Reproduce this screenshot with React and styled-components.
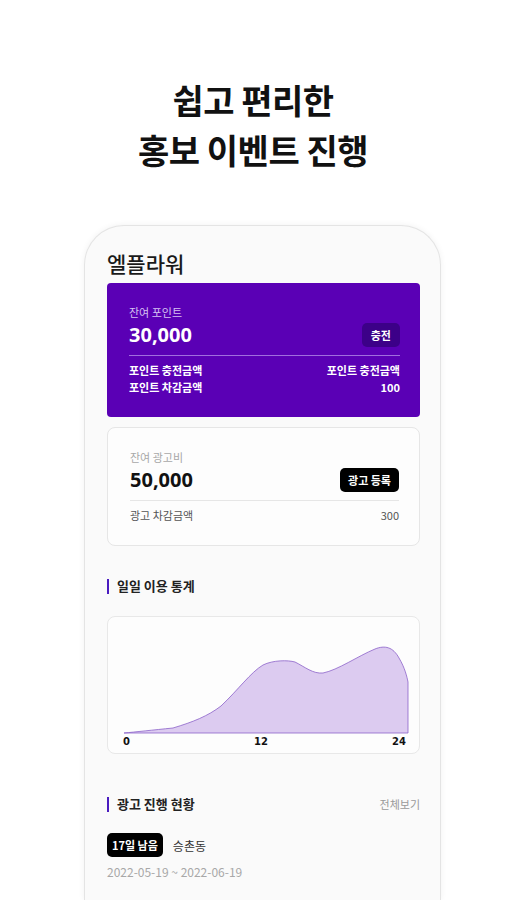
import React from 'react'
import styled, {createGlobalStyle} from 'styled-components'

const Global = createGlobalStyle`
  html, body {
    margin: 0;
    padding: 0;
    background: #ffffff;
  }
  body {
    font-family: 'Noto Sans CJK KR', 'Noto Sans', sans-serif;
    color: #111;
  }
`

const Page = styled.div`
  width: 506px;
  height: 900px;
  overflow: hidden;
  display: flex;
  flex-direction: column;
  align-items: center;
`

const Headline = styled.h1`
  margin: 75px 0 0;
  font-size: 34px;
  line-height: 50px;
  font-weight: 700;
  text-align: center;
  color: #111;
  letter-spacing: -0.5px;
`

const Phone = styled.div`
  margin-top: 50px;
  margin-left: 19px;
  width: 357px;
  flex: 1;
  box-sizing: border-box;
  padding: 23px 20px 0 22px;
  background: #fafafa;
  border: 1px solid #e4e4e4;
  border-bottom: none;
  border-radius: 40px 40px 0 0;
  box-shadow: 0 0 6px rgba(0, 0, 0, 0.06);
`

const Brand = styled.div`
  font-size: 21px;
  line-height: 28px;
  font-weight: 500;
  color: #1a1a1a;
`

const Card = styled.div`
  margin-top: ${p => p.gap || 0}px;
  box-sizing: border-box;
  padding: 21px 20px 21px 22px;
  border-radius: ${p => (p.purple ? 4 : 8)}px;
  background: ${p => (p.purple ? '#5a00b5' : '#fdfdfd')};
  border: ${p => (p.purple ? 'none' : '1px solid #e6e6e6')};
  color: ${p => (p.purple ? '#fff' : '#111')};
`

const Label = styled.div`
  font-size: 11px;
  line-height: 16px;
  color: ${p => (p.light ? '#d6c2f2' : '#a8a8a8')};
`

const AmountRow = styled.div`
  margin-top: 2px;
  display: flex;
  align-items: center;
  justify-content: space-between;
`

const Amount = styled.div`
  font-size: 20px;
  line-height: 26px;
  font-weight: 700;
  font-family: 'Noto Sans', 'Noto Sans CJK KR', sans-serif;
`

const SmallButton = styled.div`
  height: 24px;
  padding: 0 ${p => (p.dark ? 8 : 9)}px;
  display: flex;
  align-items: center;
  border-radius: 5px;
  font-size: 11px;
  font-weight: 700;
  color: #fff;
  background: ${p => (p.dark ? '#000' : '#3c0088')};
`

const Divider = styled.div`
  margin: 7px 0 ${p => p.after || 6}px;
  height: 1px;
  background: ${p => (p.light ? 'rgba(220, 200, 255, 0.55)' : '#e6e6e6')};
`

const InfoRow = styled.div`
  display: flex;
  justify-content: space-between;
  font-size: 11px;
  line-height: 17px;
  font-weight: ${p => (p.bold ? 700 : 400)};
  color: ${p => p.color || 'inherit'};
`

const SectionHead = styled.div`
  margin-top: ${p => p.gap}px;
  display: flex;
  align-items: center;
  justify-content: space-between;
`

const SectionTitle = styled.div`
  display: flex;
  align-items: center;
  gap: 8px;
  font-size: 13px;
  line-height: 20px;
  font-weight: 700;
  color: #222;

  &::before {
    content: '';
    width: 2px;
    height: 15px;
    background: #4a1cc0;
  }
`

const More = styled.div`
  font-size: 11px;
  color: #999;
`

const ChartCard = styled.div`
  margin-top: 20px;
  height: 138px;
  box-sizing: border-box;
  border: 1px solid #e8e8e8;
  border-radius: 8px;
  background: #fdfdfd;
  padding: 0 13px 0 15px;
  display: flex;
  flex-direction: column;
  justify-content: flex-end;
`

const Axis = styled.div`
  display: flex;
  justify-content: space-between;
  padding: 2px 0 5px;
  font-size: 10px;
  line-height: 12px;
  font-weight: 700;
  color: #111;
  font-family: 'DejaVu Sans', sans-serif;
`

const BadgeRow = styled.div`
  margin-top: 19px;
  display: flex;
  align-items: center;
  gap: 10px;
`

const Badge = styled.div`
  height: 24px;
  padding: 0 5px;
  display: flex;
  align-items: center;
  border-radius: 5px;
  background: #000;
  color: #fff;
  font-size: 11px;
  font-weight: 700;
`

const Place = styled.div`
  font-size: 12px;
  color: #333;
`

const Period = styled.div`
  margin-top: 7px;
  font-size: 12px;
  line-height: 16px;
  color: #a8a8a8;
`

const area =
  'M1 101 C 12 100, 30 98, 50 96 C 70 90, 85 84, 98 74 C 115 58, 128 40, 140 33 C 150 28, 165 28, 172 30 C 182 35, 190 42, 200 41 C 215 38, 235 24, 252 17 C 262 13, 270 15, 276 26 C 282 36, 284 45, 285 50 L 285 101 Z'

const Chart = () => (
  <svg width="286" height="102" viewBox="0 0 286 102" style={{display: 'block'}}>
    <path d={area} fill="#dccbf0" stroke="#8b62c9" strokeWidth="0.8" />
  </svg>
)

export default function App() {
  return (
    <Page>
      <Global />
      <Headline>
        쉽고 편리한
        <br />
        홍보 이벤트 진행
      </Headline>
      <Phone>
        <Brand>엘플라워</Brand>
        <Card purple gap={6}>
          <Label light>잔여 포인트</Label>
          <AmountRow>
            <Amount>30,000</Amount>
            <SmallButton>충전</SmallButton>
          </AmountRow>
          <Divider light />
          <InfoRow bold>
            <span>포인트 충전금액</span>
            <span>포인트 충전금액</span>
          </InfoRow>
          <InfoRow bold>
            <span>포인트 차감금액</span>
            <span>100</span>
          </InfoRow>
        </Card>
        <Card gap={10}>
          <Label>잔여 광고비</Label>
          <AmountRow>
            <Amount>50,000</Amount>
            <SmallButton dark>광고 등록</SmallButton>
          </AmountRow>
          <Divider after={6} />
          <InfoRow color="#555">
            <span>광고 차감금액</span>
            <span>300</span>
          </InfoRow>
        </Card>
        <SectionHead gap={30}>
          <SectionTitle>일일 이용 통계</SectionTitle>
        </SectionHead>
        <ChartCard>
          <Chart />
          <Axis>
            <span>0</span>
            <span>12</span>
            <span>24</span>
          </Axis>
        </ChartCard>
        <SectionHead gap={40}>
          <SectionTitle>광고 진행 현황</SectionTitle>
          <More>전체보기</More>
        </SectionHead>
        <BadgeRow>
          <Badge>17일 남음</Badge>
          <Place>승촌동</Place>
        </BadgeRow>
        <Period>2022-05-19 ~ 2022-06-19</Period>
      </Phone>
    </Page>
  )
}
